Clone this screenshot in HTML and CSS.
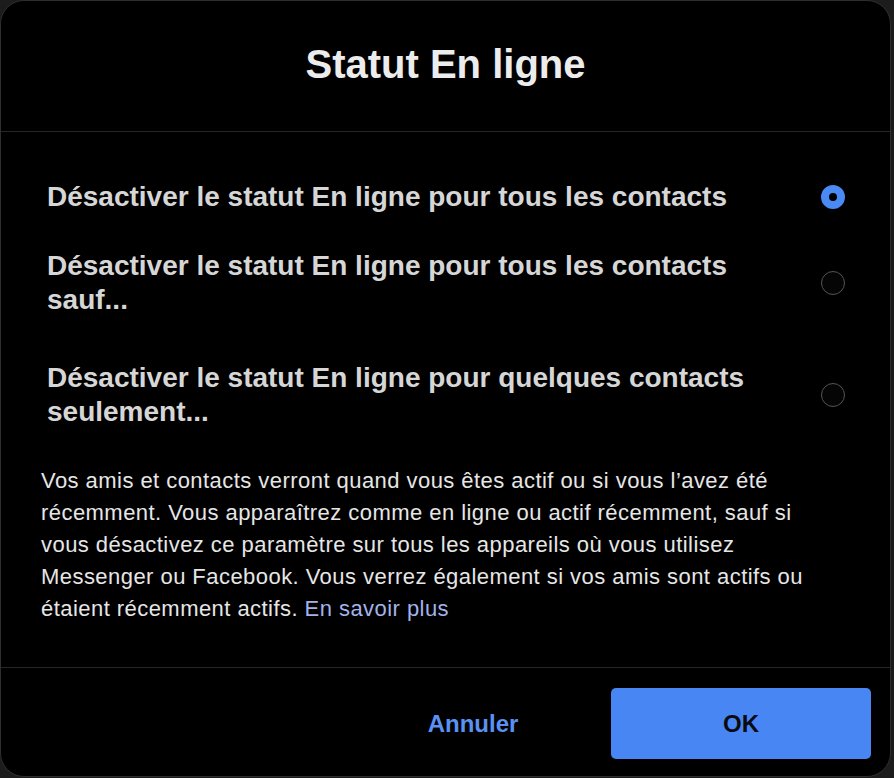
FILE: index.html
```html
<!DOCTYPE html>
<html lang="fr">
  <head>
    <meta charset="UTF-8" />
    <meta name="viewport" content="width=device-width, initial-scale=1.0" />
    <title>Statut En ligne</title>
    <link rel="stylesheet" href="styles.css">
  </head>
  <body>
    <div class="dialog">
      <div class="dialog-header">
        <h1>Statut En ligne</h1>
      </div>

      <div class="dialog-body">
        <!-- Options -->
        <div class="options">
          <label class="option option-first">
            <span class="option-text">Désactiver le statut En ligne pour tous les contacts</span>
            <span class="radio checked"></span>
          </label>
          <label class="option option-second">
            <span class="option-text">Désactiver le statut En ligne pour tous les contacts sauf...</span>
            <span class="radio"></span>
          </label>
          <label class="option">
            <span class="option-text">Désactiver le statut En ligne pour quelques contacts seulement...</span>
            <span class="radio"></span>
          </label>
        </div>

        <p class="description">
          Vos amis et contacts verront quand vous êtes actif ou si vous l’avez été récemment. Vous apparaîtrez comme en ligne ou actif récemment, sauf si vous désactivez ce paramètre sur tous les appareils où vous utilisez Messenger ou Facebook. Vous verrez également si vos amis sont actifs ou étaient récemment actifs. <a href="#" class="learn-more">En savoir plus</a>
        </p>
      </div>

      <!-- Buttons -->
      <div class="dialog-footer">
        <button class="cancel-btn">Annuler</button>
        <button class="ok-btn">OK</button>
      </div>
    </div>
  </body>
</html>
```

FILE: styles.css
```css
/* General Styles */
body {
  margin: 0;
  padding: 0;
  background-color: #1c1c1c;
  font-family: "Liberation Sans", Arial, sans-serif;
  overflow: hidden;
}

.dialog {
  box-sizing: border-box;
  width: 891px;
  height: 777px;
  background-color: #000;
  border: 1px solid #2e2e2e;
  border-radius: 24px;
  display: flex;
  flex-direction: column;
}

/* Header */
.dialog-header {
  height: 130px;
  border-bottom: 1px solid #262626;
  display: flex;
  justify-content: center;
}

h1 {
  margin: 0;
  padding-top: 40px;
  font-size: 40px;
  line-height: 46px;
  font-weight: bold;
  color: #ececec;
}

.dialog-body {
  flex: 1;
}

/* Options */
.options {
  display: flex;
  flex-direction: column;
  padding-top: 48px;
}

.option {
  display: flex;
  align-items: center;
  padding: 0 45px 0 46px;
  cursor: pointer;
}

.option-first {
  margin-bottom: 35px;
}

.option-second {
  margin-bottom: 44px;
}

.option-text {
  flex: 1;
  font-size: 28px;
  line-height: 34px;
  font-weight: bold;
  color: #d6d6d6;
  padding-right: 20px;
}

.radio {
  box-sizing: border-box;
  width: 24px;
  height: 24px;
  border-radius: 50%;
  border: 1px solid #555;
  background-color: #050505;
  flex-shrink: 0;
}

.radio.checked {
  border: 8px solid #4a8af4;
  background-color: #000;
}

/* Description */
.description {
  margin: 36px 0 0;
  padding: 0 48px 0 40px;
  font-size: 22px;
  line-height: 32px;
  letter-spacing: 0.45px;
  color: #e6e6e6;
}

.learn-more {
  color: #a3b3ea;
  text-decoration: none;
}

/* Footer */
.dialog-footer {
  border-top: 1px solid #262626;
  display: flex;
  justify-content: flex-end;
  align-items: center;
  gap: 38px;
  padding: 20px 19px 17px;
}

button {
  height: 71px;
  font-family: "Liberation Sans", Arial, sans-serif;
  font-size: 24px;
  font-weight: bold;
  border: none;
  border-radius: 5px;
  cursor: pointer;
}

.cancel-btn {
  width: 200px;
  background: none;
  color: #5b91f3;
}

.ok-btn {
  width: 260px;
  background-color: #4886f3;
  color: #0a0a12;
}
```
